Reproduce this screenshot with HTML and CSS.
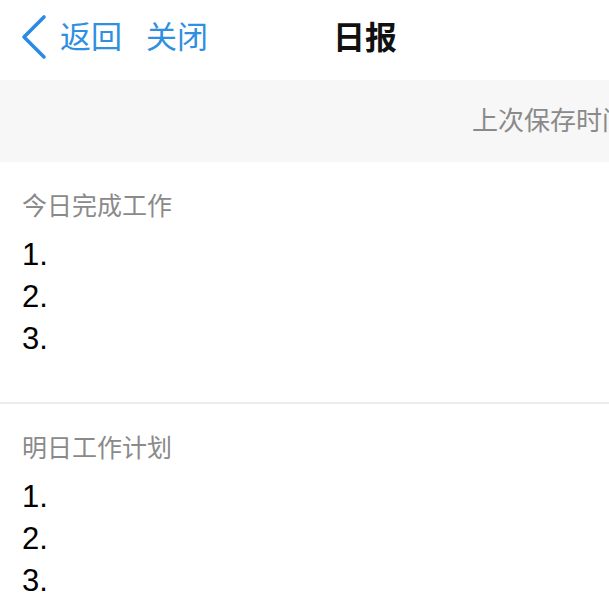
FILE: index.html
```html
<!DOCTYPE html>
<html lang="zh">
<head>
<meta charset="utf-8">
<link rel="stylesheet" href="styles.css">
</head>
<body>
<div class="page">
  <header class="nav">
    <div class="nav-left">
      <svg class="chev" width="28" height="46" viewBox="0 0 28 46"><polyline points="24,3 4,23 24,43" fill="none" stroke="#2a8ae4" stroke-width="3.6" stroke-linecap="round" stroke-linejoin="round"/></svg>
      <span class="nav-link">返回</span>
      <span class="nav-link close">关闭</span>
    </div>
    <div class="nav-title">日报</div>
  </header>
  <div class="save-bar"><span>上次保存时间：10:32</span></div>
  <section class="block">
    <div class="label">今日完成工作</div>
    <div class="list">
      <div>1.</div>
      <div>2.</div>
      <div>3.</div>
    </div>
  </section>
  <section class="block second">
    <div class="label">明日工作计划</div>
    <div class="list">
      <div>1.</div>
      <div>2.</div>
      <div>3.</div>
    </div>
  </section>
</div>
</body>
</html>
```
FILE: styles.css
```css
html, body {
  margin: 0;
  padding: 0;
  background: #ffffff;
}
body {
  width: 609px;
  height: 616px;
  overflow: hidden;
  font-family: "Noto Sans CJK SC", "Liberation Sans", sans-serif;
}
.page {
  width: 609px;
}
.nav {
  height: 80px;
  display: flex;
  align-items: center;
  box-sizing: border-box;
  padding-left: 20px;
}
.nav-left {
  display: flex;
  align-items: center;
  width: 313px;
}
.chev {
  display: block;
  margin-top: -6px;
}
.nav-link {
  color: #2f8fe0;
  font-size: 31px;
  line-height: 40px;
  margin-left: 12px;
  margin-top: -11px;
}
.nav-link.close {
  margin-left: 24px;
}
.nav-title {
  font-size: 32px;
  font-weight: bold;
  color: #111;
  line-height: 40px;
  margin-top: -11px;
}
.save-bar {
  height: 82px;
  background: #f7f7f7;
  display: flex;
  align-items: center;
  padding-left: 472px;
  white-space: nowrap;
  overflow: hidden;
  font-size: 26px;
  color: #8a8a8a;
}
.save-bar span {
  margin-top: -6px;
}
.block {
  padding: 24px 0 0 22px;
  height: 242px;
  box-sizing: border-box;
  border-bottom: 2px solid #ececec;
}
.block.second {
  border-bottom: none;
  padding-top: 24px;
}
.label {
  font-size: 25px;
  color: #8a8a8a;
  line-height: 36px;
}
.list {
  margin-top: 12px;
  font-family: "Liberation Sans", sans-serif;
  font-size: 31px;
  line-height: 42px;
  color: #000;
}
```
